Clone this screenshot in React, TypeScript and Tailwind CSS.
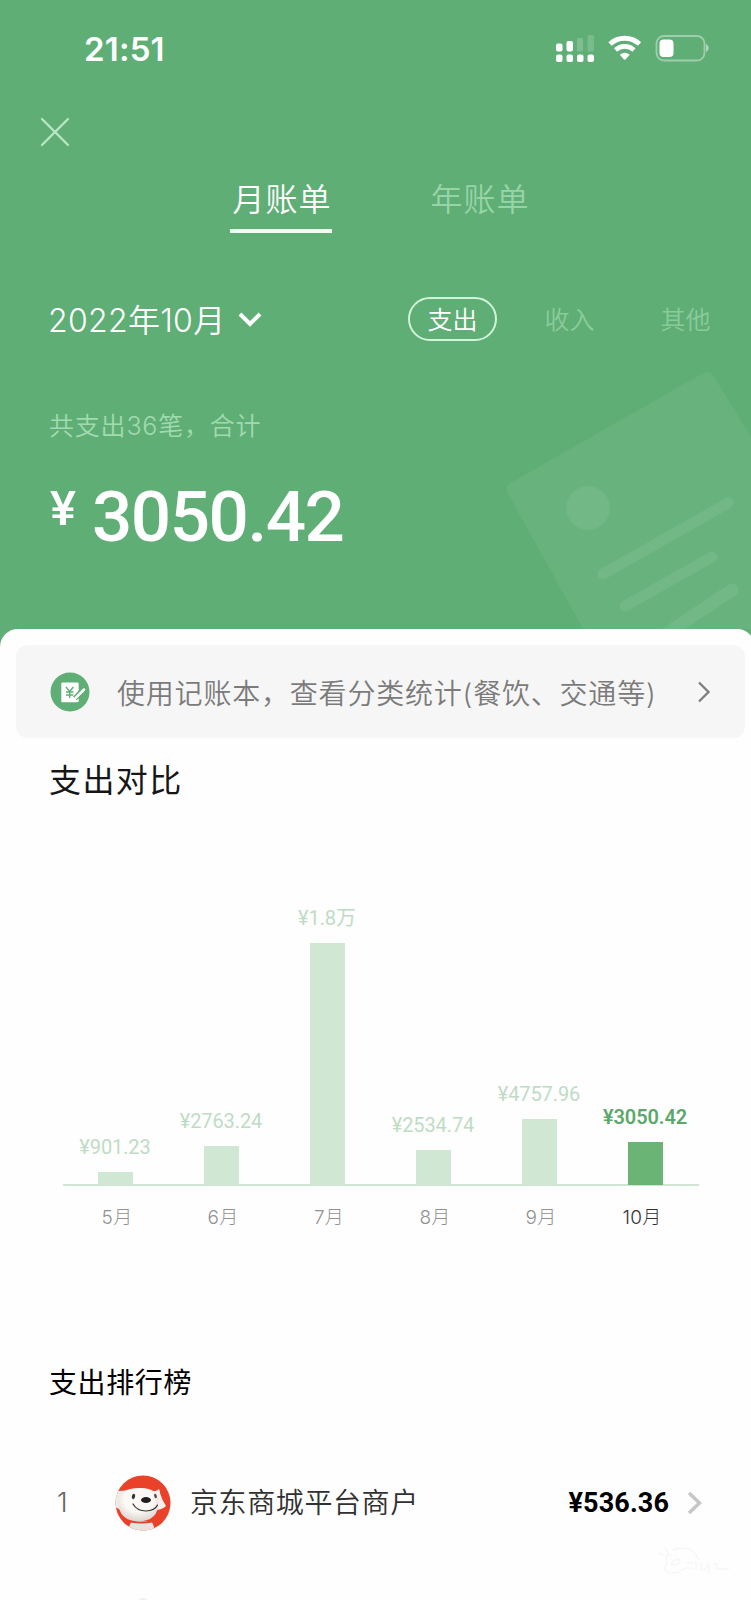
import { useState } from 'react';

const months = [
  { label: '5月', value: '¥901.23', height: 13 },
  { label: '6月', value: '¥2763.24', height: 39 },
  { label: '7月', value: '¥1.8万', height: 242 },
  { label: '8月', value: '¥2534.74', height: 35 },
  { label: '9月', value: '¥4757.96', height: 66 },
  { label: '10月', value: '¥3050.42', height: 43 },
];

function StatusIcons() {
  return (
    <svg width="156" height="30" viewBox="0 0 156 30" fill="#fff">
      {/* signal */}
      <rect x="2" y="9.5" width="6.5" height="8" rx="2" />
      <rect x="12.5" y="7" width="6.5" height="10.5" rx="2" />
      <rect x="23" y="4" width="6" height="13.5" rx="1.5" opacity=".2" />
      <rect x="33.5" y="1" width="6.5" height="16.5" rx="1.5" opacity=".16" />
      <rect x="2" y="20.5" width="6.5" height="7.5" rx="2" />
      <rect x="12.5" y="20.5" width="6.5" height="7.5" rx="2" />
      <rect x="23" y="20.5" width="6.5" height="7.5" rx="2" />
      <rect x="33.5" y="20.5" width="6.5" height="7.5" rx="2" />
      {/* wifi */}
      <path d="M56 10C64.500 2.300 77 2.300 85.500 10" fill="none" stroke="#fff" strokeWidth="4.800" />
      <path d="M61.500 16c5.300-4.900 13.200-4.900 18.500 0" fill="none" stroke="#fff" strokeWidth="4.600" />
      <path d="M65.800 20.800c3-2.700 6.900-2.700 9.900 0l-4 4.400q-.95.9-1.900 0z" />
      {/* battery */}
      <rect x="102.500" y="2" width="48" height="24.500" rx="7.500" fill="none" stroke="#fff" strokeWidth="1.900" opacity=".4" />
      <rect x="105.500" y="5.500" width="14" height="17.500" rx="4" />
      <path d="M152.500 10.500q3.500 3.500 0 7z" opacity=".5" stroke="#fff" strokeWidth="1" />
    </svg>
  );
}

function BillArt() {
  return (
    <svg className="absolute right-0 top-[360px]" width="251" height="269" viewBox="500 360 251 269">
      <path d="M510 483Q504 487 508 494L583 629H751V437L713 375Q709 370 703 373Z" fill="#fff" opacity=".05" />
      <g opacity=".07" fill="#fff" stroke="#fff" strokeLinecap="round">
        <circle cx="588" cy="508" r="22" stroke="none" />
        <path d="M603 574L728 503" strokeWidth="11" />
        <path d="M625 606L712 557" strokeWidth="11" />
        <path d="M660 638L732 590" strokeWidth="13" />
      </g>
    </svg>
  );
}

function BookIcon() {
  return (
    <svg width="40" height="40" viewBox="0 0 40 40">
      <circle cx="20" cy="20" r="19.500" fill="#5fae76" />
      <path d="M12.500 10.500H27.500q1.200 0 1.200 1.200V29q0 1.200-1.200 1.200H12.500q-1.200 0-1.200-1.200V11.700q0-1.200 1.200-1.200z" fill="#fff" />
      <path d="M16 15l3.700 4.500 3.700-4.500M19.700 19v7M16 20h7.400M16 23h7.400" fill="none" stroke="#5fae76" strokeWidth="1.400" />
      <path d="M33.500 17L25 26.500" stroke="#5fae76" strokeWidth="5" />
      <path d="M34 17.500L25.500 26l-1.500 2" fill="none" stroke="#fff" strokeWidth="2.500" strokeLinecap="round" />
    </svg>
  );
}

function DogAvatar() {
  return (
    <svg width="56" height="56" viewBox="0 0 56 56">
      <defs>
        <clipPath id="avatar">
          <circle cx="28" cy="28" r="27.500" />
        </clipPath>
        <radialGradient id="fur" cx=".5" cy=".35" r=".65">
          <stop offset=".55" stopColor="#fbf8f5" />
          <stop offset="1" stopColor="#dcd3ce" />
        </radialGradient>
      </defs>
      <g clipPath="url(#avatar)">
        <rect width="56" height="56" fill="#e9412a" />
        <path d="M14 57q-1-8 4-11h18q4 5 3 11z" fill="#e9e3df" />
        <path d="M16 46.500q11 2 21 0" fill="none" stroke="#d84632" strokeWidth="1.800" />
        <path d="M0 32V16q6 0 16-1L8 36z" fill="#f1ebe7" />
        <path d="M36 16q5 1 8-2 1 2 1 4 2 7 6 13-4 4-11 4z" fill="#f6f1ee" />
        <path d="M3 27Q4 13 24 13q19-1 19.500 14 0 19-20 19.500Q4 46 3 27z" fill="url(#fur)" />
        <path d="M18 29q4 7 13 7 9-.3 11.500-6" fill="none" stroke="#34302f" strokeWidth="1.200" strokeLinecap="round" />
        <ellipse cx="31" cy="25" rx="5" ry="3" fill="#211f1f" />
        <ellipse cx="18.500" cy="21.500" rx="1.600" ry="2.800" transform="rotate(12 18.500 21.500)" fill="#353130" />
        <ellipse cx="40.500" cy="21" rx="1.300" ry="2.400" transform="rotate(-15 40.500 21)" fill="#5a4b47" />
      </g>
    </svg>
  );
}

export default function App() {
  const [tab, setTab] = useState('month');
  const [kind, setKind] = useState('支出');

  return (
    <main className="h-[1600px] w-[751px] overflow-hidden bg-[#5fae76] font-['Inter','Noto_Sans_CJK_SC',sans-serif] text-white">
      <header className="relative h-[629px]">
        <BillArt />

        {/* status bar */}
        <div className="flex h-[98px] items-center justify-between pl-[84px] pr-[41px]">
          <span className="text-[33px] font-semibold leading-none tracking-[0.2px]">21:51</span>
          <StatusIcons />
        </div>

        <div className="h-[68px] pl-[40px] pt-[19px]">
          <svg width="30" height="30" viewBox="0 0 30 30" stroke="#bde7c6" strokeWidth="2.200" strokeLinecap="round">
            <path d="M2 2l26 26M28 2L2 28" />
          </svg>
        </div>

        {/* tabs */}
        <nav className="flex h-[67px] gap-[96px] pl-[230px] pt-[5px] text-[32px] font-[350] leading-[48px] tracking-[1px]">
          <button
            onClick={() => setTab('month')}
            className={
              tab === 'month'
                ? 'h-[62px] w-[102px] border-b-4 border-[#effff2] pb-px pl-[2px]'
                : 'h-[62px] w-[102px] pb-[5px] pl-[2px] text-[#98d4a8]'
            }
          >
            月账单
          </button>
          <button
            onClick={() => setTab('year')}
            className={
              tab === 'year'
                ? 'h-[62px] w-[102px] border-b-4 border-[#effff2] pb-px pl-[2px]'
                : 'h-[62px] w-[102px] pb-[5px] pl-[2px] text-[#98d4a8]'
            }
          >
            年账单
          </button>
        </nav>

        {/* month and type filter */}
        <div className="mt-[64px] flex h-[44px] items-center">
          <div className="flex w-[408px] shrink-0 items-center pl-[48px]">
            <span className="pt-[3px] text-[32px] font-[350] leading-[44px] tracking-[0.3px]">2022年10月</span>
            <svg className="ml-[13px] mt-[2px]" width="24" height="16" viewBox="0 0 24 16" fill="none" stroke="#fff" strokeWidth="4">
              <path d="M2 2l10 10L22 2" />
            </svg>
          </div>
          {['支出', '收入', '其他'].map((k) => (
            <button
              key={k}
              onClick={() => setKind(k)}
              className={
                k === kind
                  ? 'mr-[28px] h-[44px] w-[89px] shrink-0 rounded-full border-2 border-[#d0f5d8] text-[25px] font-[350] leading-[42px]'
                  : 'mr-[27px] h-[44px] w-[89px] shrink-0 text-[25px] font-[350] leading-[46px] text-[#8acb9b]'
              }
            >
              {k}
            </button>
          ))}
        </div>

        <p className="mt-[65px] pl-[49px] text-[25px] font-[350] leading-[40px] tracking-[0.8px] text-[#a2dab0]">共支出36笔，合计</p>
        <div className="mt-[31px] flex h-[80px] items-start pl-[50px] font-['Roboto'] font-medium">
          <span className="mt-[7px] w-[42px] text-[49px] leading-[50px]">¥</span>
          <span className="text-[71px] leading-[80px] tracking-[-1.5px]">3050.42</span>
        </div>
      </header>

      <section className="h-[971px] w-[755px] rounded-t-[18px] bg-[#fefefe] pt-[16px] text-black">
        {/* bookkeeping banner */}
        <a className="ml-[16px] flex h-[93px] w-[729px] items-center rounded-[12px] bg-[#f6f6f6] pl-[34px] text-[#7b7b7b]">
          <BookIcon />
          <span className="ml-[27px] whitespace-nowrap pt-[5px] text-[28px] font-[350] leading-[40px] tracking-[0.8px]">
            使用记账本，查看分类统计(餐饮、交通等)
          </span>
          <svg className="ml-auto mr-[34px]" width="14" height="24" viewBox="0 0 14 24" fill="none" stroke="#808080" strokeWidth="2.400">
            <path d="M2 2.500l9.500 9.500L2 21.500" />
          </svg>
        </a>

        <h2 className="mt-[19px] pl-[49px] text-[32px] leading-[48px] tracking-[1.4px] text-[#161616]">支出对比</h2>

        {/* chart */}
        <div className="ml-[63px] mt-[81px] flex h-[300px] w-[636px] items-end border-b-2 border-[#cfe4d3]">
          {months.map((m, i) => (
            <div key={m.label} className="-mb-[1px] flex w-[106px] shrink-0 flex-col items-center pr-[2px]">
              <span
                className={
                  i === 5
                    ? "mb-[11px] whitespace-nowrap font-['Roboto','Noto_Sans_CJK_SC'] text-[20px] font-semibold leading-[28px] tracking-[-0.1px] text-[#5aa96a]"
                    : "mb-[11px] whitespace-nowrap font-['Roboto','Noto_Sans_CJK_SC'] text-[20px] leading-[28px] tracking-[-0.1px] text-[#bedcc5]"
                }
              >
                {m.value}
              </span>
              <div className={i === 5 ? 'w-[35px] bg-[#6ab575]' : 'w-[35px] bg-[#d0e8d3]'} style={{ height: m.height }} />
            </div>
          ))}
        </div>
        <div className="ml-[64px] flex w-[636px] pt-[17px] text-[19px] font-light leading-[30px] tracking-[0.3px] text-[#929292]">
          {months.map((m, i) => (
            <span key={m.label} className={i === 5 ? 'w-[106px] pr-[10px] text-center text-[#333]' : 'w-[106px] text-center'}>
              {m.label}
            </span>
          ))}
        </div>

        <h2 className="mt-[129px] pl-[49px] pt-px text-[28px] leading-[40px] tracking-[0.6px]">支出排行榜</h2>

        {/* ranking */}
        <div className="mt-[72px] flex h-[56px] items-center">
          <span className="w-[115px] pl-[57px] text-[27px] font-light text-[#666]">1</span>
          <DogAvatar />
          <span className="ml-[19px] text-[28px] font-[350] leading-[40px] tracking-[0.6px] text-[#303030]">京东商城平台商户</span>
          <span className="ml-auto pt-px font-['Roboto'] text-[27px] font-bold tracking-[0.1px]">¥536.36</span>
          <svg className="ml-[18px] mr-[52px]" width="16" height="24" viewBox="0 0 16 24" fill="none" stroke="#c6c6c6" strokeWidth="3.500">
            <path d="M2 2l10.500 10L2 22" />
          </svg>
        </div>

        {/* watermark */}
        <svg className="ml-[655px] mt-[14px]" width="76" height="32" viewBox="0 0 76 32" fill="none" stroke="#f5f7f7" strokeWidth="1.500">
          <path d="M3 8l7 3M10 2l4 8M18 5q18-7 26 10M17 10q-8-1-5 8-6 8 4 10 9 0 14-5M16 20q9 0 9-5-6-2-9 5" />
          <path d="M30 18h9M29 23h9M41 17v8M46 18v7q6 0 6-6M54 18v10M58 19q6-2 3 5h13" />
        </svg>
        <div className="ml-[135px] mt-[21px] h-[55px] w-[16px] rounded-full bg-[#f1f1f1]" />
      </section>
    </main>
  );
}
